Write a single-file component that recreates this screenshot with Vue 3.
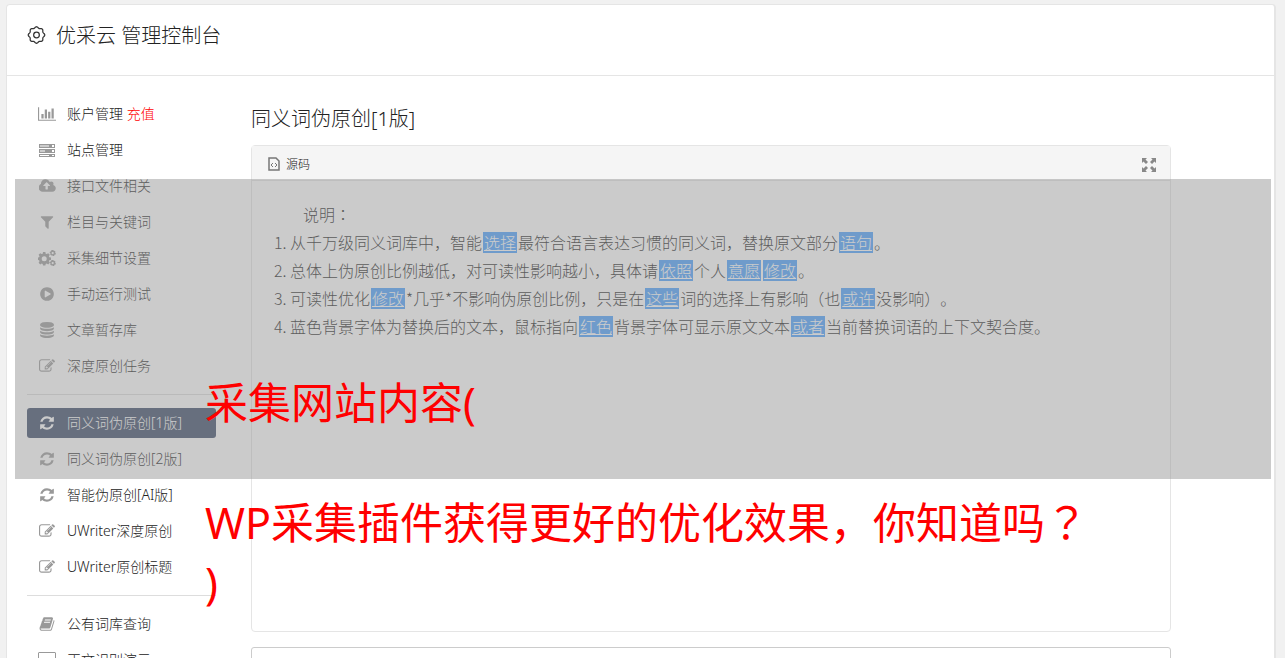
<script setup>
const icons = {
  chart: { box: '0 0 2048 1792', w: 18, paths: ['M640 896v512h-256v-512h256zm384-512v1024h-256v-1024h256zm1024 1152v128h-2048v-1536h128v1408h1920zm-640-896v768h-256v-768h256zm384-384v1152h-256v-1152h256z'] },
  server: { box: '0 0 18 16', w: 18, paths: ['M1 2h16v4H1zM2 3.500v1h9v-1zM14 3v2h2V3zM1 7h16v4H1zM2 8.500v1h5v-1zM14 8v2h2V8zM1 12h16v3H1zM2 13v1h9v-1zM14 13v1h2v-1z'] },
  cloud: { box: '0 0 1856 1792', w: 17, paths: ['M1216 864q0-14-9-23l-352-352q-9-9-23-9t-23 9l-351 351q-10 12-10 24 0 14 9 23t23 9h224v352q0 13 9.500 22.500t22.500 9.500h192q13 0 22.500-9.500t9.500-22.500v-352h224q13 0 22.500-9.500t9.500-22.500zm640 288q0 159-112.500 271.500t-271.500 112.500h-1088q-185 0-316.500-131.500t-131.500-316.500q0-130 70-240t188-165q-2-30-2-43 0-212 150-362t362-150q156 0 285.500 87t188.500 231q71-62 166-62 106 0 181 75t75 181q0 76-41 138 130 31 213.500 135.500t83.500 238.500z'] },
  filter: { box: '0 0 1792 1792', w: 16, paths: ['M1595 295q17 41-14 70l-493 493v742q0 42-39 59-13 5-25 5-27 0-45-19l-256-256q-19-19-19-45v-486l-493-493q-31-29-14-70 17-39 59-39h1280q42 0 59 39z'] },
  cogs: { box: '0 0 18 16', w: 18, paths: [
    'M5 2h2.400l.3 1.700 1 .4L10.200 3.200 11.800 4.800 10.900 6.300l.4 1L13 7.600v2.400l-1.700.3-.4 1 .9 1.500-1.600 1.600-1.500-.9-1 .4-.3 1.700H5l-.3-1.700-1-.4-1.500.9L.6 12.800l.9-1.500-.4-1L-.4 10V7.600l1.500-.3.4-1L.6 4.800 2.200 3.200l1.500.9 1-.4zM6.200 6.300a2.500 2.500 0 1 0 0 5 2.500 2.500 0 1 0 0-5z',
    'M14 0h1.500l.3 1 1-.3.8 1.200-.6.8.9.6-.5 1.400-1 .1-.2 1.100-1.400.2-.6-.9-1 .4-1-1 .4-1-.9-.6.2-1.400 1.100-.2.1-1zM14.700 2a1.100 1.100 0 1 0 0 2.200 1.100 1.100 0 1 0 0-2.200z',
    'M14 10h1.500l.3 1 1-.3.8 1.200-.6.8.9.6-.5 1.400-1 .1-.2 1.100-1.400.2-.6-.9-1 .4-1-1 .4-1-.9-.6.2-1.400 1.100-.2.1-1zM14.700 12a1.100 1.100 0 1 0 0 2.200 1.100 1.100 0 1 0 0-2.200z'] },
  play: { box: '0 0 1792 1792', w: 16, paths: ['M896 128q209 0 385.500 103t279.500 279.500 103 385.500-103 385.500-279.500 279.500-385.500 103-385.500-103-279.500-279.500-103-385.500 103-385.500 279.500-279.500 385.500-103zm384 823q32-18 32-55t-32-55l-544-320q-31-19-64-1-32 19-32 56v640q0 37 32 56 16 8 32 8 17 0 32-9z'] },
  database: { box: '0 0 1792 1792', w: 16, paths: ['M896 768q237 0 443-43t325-127v170q0 69-103 128t-280 93.500-385 34.500-385-34.500-280-93.500-103-128v-170q119 84 325 127t443 43zm0 768q237 0 443-43t325-127v170q0 69-103 128t-280 93.500-385 34.500-385-34.500-280-93.500-103-128v-170q119 84 325 127t443 43zm0-384q237 0 443-43t325-127v170q0 69-103 128t-280 93.500-385 34.500-385-34.500-280-93.500-103-128v-170q119 84 325 127t443 43zm0-1152q208 0 385 34.500t280 93.500 103 128v128q0 69-103 128t-280 93.500-385 34.500-385-34.500-280-93.500-103-128v-128q0-69 103-128t280-93.500 385-34.500z'] },
  edit: { box: '0 0 1792 1792', w: 16, paths: ['M888 1184l116-116-152-152-116 116v56h96v96h56zm440-720q-16-16-33 1l-350 350q-17 17-1 33t33-1l350-350q17-17 1-33zm80 594v190q0 119-84.500 203.500t-203.500 84.500h-832q-119 0-203.500-84.500t-84.500-203.500v-832q0-119 84.500-203.500t203.500-84.500h832q63 0 117 25 15 7 18 23 3 17-9 29l-49 49q-14 14-32 8-23-6-45-6h-832q-66 0-113 47t-47 113v832q0 66 47 113t113 47h832q66 0 113-47t47-113v-126q0-13 9-22l64-64q15-15 35-7t20 29zm-96-738l288 288-672 672h-288v-288zm444 132l-92 92-288-288 92-92q28-28 68-28t68 28l152 152q28 28 28 68t-28 68z'] },
  refresh: { box: '0 0 1792 1792', w: 16, paths: ['M1639 1056q0 5-1 7-64 268-268 434.500t-478 166.500q-146 0-282.500-55t-243.500-157l-129 129q-19 19-45 19t-45-19-19-45v-448q0-26 19-45t45-19h448q26 0 45 19t19 45-19 45l-137 137q71 66 161 102t187 36q134 0 250-65t186-179q11-17 53-117 8-23 30-23h192q13 0 22.500 9.500t9.500 22.500zm25-800v448q0 26-19 45t-45 19h-448q-26 0-45-19t-19-45 19-45l138-138q-148-137-349-137-134 0-250 65t-186 179q-11 17-53 117-8 23-30 23h-199q-13 0-22.500-9.500t-9.500-22.500v-7q65-268 270-434.500t480-166.500q146 0 284 55.500t245 156.500l130-129q19-19 45-19t45 19 19 45z'] },
  book: { box: '0 0 1792 1792', w: 16, paths: ['M1703 478q40 57 18 129l-275 906q-19 64-76.500 107.500t-122.500 43.500h-923q-77 0-148.500-53.500t-99.500-131.500q-24-67-2-127 0-4 3-27t4-37q1-8-3-21.500t-3-19.500q2-11 8-21t16.500-23.500 16.500-23.500q23-38 45-91.500t30-91.500q3-10 .5-30t-.5-28q3-11 17-28t17-23q21-36 42-92t25-90q1-9-2.500-32t.5-28q4-13 22-30.500t22-22.500q19-26 42.500-84.500t27.500-96.500q1-8-3-25.500t-2-26.500q2-8 9-18t18-23 17-21q8-12 16.500-30.500t15-35 16-36 19.500-32 26.500-23.500 36-11.500 47.500 5.500l-1 3q38-9 51-9h761q74 0 114 56t18 130l-274 906q-36 119-71.500 153.500t-128.500 34.500h-869q-27 0-38 15-11 16-1 43 24 70 144 70h923q29 0 56-15.500t35-41.500l300-987q7-22 5-57 38 15 59 43zm-1064 2q-4 13 2 22.500t20 9.500h608q13 0 25.500-9.500t16.500-22.500l21-64q4-13-2-22.500t-20-9.500h-608q-13 0-25.500 9.500t-16.500 22.500zm-83 256q-4 13 2 22.500t20 9.500h608q13 0 25.500-9.500t16.500-22.500l21-64q4-13-2-22.500t-20-9.500h-608q-13 0-25.500 9.500t-16.500 22.500z'] },
  screen: { box: '0 0 18 16', w: 18, paths: ['M1 0h16l1 1v11l-1 1h-6v2h2v1H5v-1h2v-2H1l-1-1V1zM1 1v11h16V1z'] }
}

const groups = [
  [
    { icon: 'chart', text: '账户管理', extra: '充值' },
    { icon: 'server', text: '站点管理' },
    { icon: 'cloud', text: '接口文件相关' },
    { icon: 'filter', text: '栏目与关键词' },
    { icon: 'cogs', text: '采集细节设置' },
    { icon: 'play', text: '手动运行测试' },
    { icon: 'database', text: '文章暂存库' },
    { icon: 'edit', text: '深度原创任务' }
  ],
  [
    { icon: 'refresh', text: '同义词伪原创[1版]', active: true },
    { icon: 'refresh', text: '同义词伪原创[2版]' },
    { icon: 'refresh', text: '智能伪原创[AI版]' },
    { icon: 'edit', text: 'UWriter深度原创' },
    { icon: 'edit', text: 'UWriter原创标题' }
  ],
  [
    { icon: 'book', text: '公有词库查询' },
    { icon: 'screen', text: '正文识别演示' }
  ]
]

// Odd-indexed parts of each line are the replaced words.
const lines = [
  ['从千万级同义词库中，智能', '选择', '最符合语言表达习惯的同义词，替换原文部分', '语句', '。'],
  ['总体上伪原创比例越低，对可读性影响越小，具体请', '依照', '个人', '意愿', '', '修改', '。'],
  ['可读性优化', '修改', '*几乎*不影响伪原创比例，只是在', '这些', '词的选择上有影响（也', '或许', '没影响）。'],
  ['蓝色背景字体为替换后的文本，鼠标指向', '红色', '背景字体可显示原文文本', '或者', '当前替换词语的上下文契合度。']
]

function gearOutline() {
  const pts = []
  for (let i = 0; i <= 96; i++) {
    const a = (i / 96) * Math.PI * 2
    const r = 8 + 0.7 * Math.cos(a * 8)
    pts.push(`${(10 + r * Math.sin(a)).toFixed(2)} ${(10 - r * Math.cos(a)).toFixed(2)}`)
  }
  return 'M' + pts.join('L') + 'Z'
}
const gear = gearOutline()
</script>

<template>
  <div class="page">
    <div class="card">
      <header class="header">
        <svg class="gear" viewBox="0 0 20 20" aria-hidden="true">
          <path :d="gear" />
          <circle cx="10" cy="10" r="3" />
        </svg>
        <h1>优采云 管理控制台</h1>
      </header>
      <div class="body">
        <nav class="side">
          <ul v-for="(group, g) in groups" :key="g">
            <li v-for="item in group" :key="item.text">
              <a href="#" :class="{ active: item.active }">
                <span class="ico">
                  <svg :viewBox="icons[item.icon].box" :width="icons[item.icon].w" height="16" aria-hidden="true">
                    <path v-for="(p, i) in icons[item.icon].paths" :key="i" :d="p" fill-rule="evenodd" />
                  </svg>
                </span>
                <span class="label">{{ item.text }} <em v-if="item.extra">{{ item.extra }}</em></span>
              </a>
            </li>
          </ul>
        </nav>
        <main class="main">
          <h2>同义词伪原创[1版]</h2>
          <section class="editor">
            <div class="toolbar">
              <button type="button" class="source">
                <svg width="12" height="14" viewBox="0 0 12 14" aria-hidden="true">
                  <path class="sheet" d="M1 1h7l3 3v9H1z" />
                  <path d="M5 6L3 8l2 2M7 6l2 2-2 2" />
                </svg>
                <span>源码</span>
              </button>
              <button type="button" class="full" aria-label="全屏">
                <svg width="14" height="14" viewBox="0 0 14 14" aria-hidden="true">
                  <path d="M0 0h5L3.500 1.500 6 4 4 6 1.500 3.500 0 5zM14 0v5l-1.500-1.500L10 6 8 4l2.500-2.500L9 0zM0 14V9l1.500 1.500L4 8l2 2-2.500 2.500L5 14zM14 14H9l1.500-1.500L8 10l2-2 2.500 2.500L14 9z" />
                </svg>
              </button>
            </div>
            <div class="content">
              <p>说明<span class="centred">：</span></p>
              <ol>
                <li v-for="(line, n) in lines" :key="n"><template v-for="(part, i) in line" :key="i"><mark v-if="i % 2">{{ part }}</mark><template v-else>{{ part }}</template></template></li>
              </ol>
            </div>
          </section>
          <section class="result"></section>
        </main>
      </div>
    </div>
    <div class="band"></div>
    <div class="caption">
      <p>采集网站内容(</p>
      <p class="second">WP采集插件获得更好的优化效果，你知道吗<span class="centred">？</span><br>)</p>
    </div>
  </div>
</template>

<style>
html,
body {
  background: #f1f1f1;
}
</style>

<style scoped>
* {
  box-sizing: border-box;
}
.page {
  position: relative;
  height: 100vh;
  overflow: hidden;
  padding: 4px 9px 0 6px;
  font-family: "Noto Sans", "Noto Sans CJK SC", sans-serif;
  font-weight: 300;
  text-spacing-trim: space-all;
  color: #222;
}
h1, h2, p, ul, ol {
  margin: 0;
  padding: 0;
}
.card {
  min-height: 100%;
  background: #fff;
  border: 1px solid #e5e5e5;
  border-right-width: 2px;
  border-radius: 4px;
}
.header {
  display: flex;
  align-items: flex-start;
  gap: 10px;
  height: 71px;
  padding: 16px 20px 0;
  border-bottom: 1px solid #e5e5e5;
}
.gear {
  width: 19px;
  height: 28px;
  fill: none;
  stroke: #333;
  stroke-width: 1.3;
}
h1, h2 {
  font-size: 20px;
  font-weight: 300;
  line-height: 28px;
}
h1 {
  padding-top: 1px;
}
.body {
  display: flex;
  gap: 35px;
  padding: 23px 20px;
}
.side {
  flex: none;
  width: 189px;
}
.side ul {
  display: flex;
  flex-direction: column;
  gap: 6px;
  list-style: none;
}
.side ul + ul {
  margin-top: 13px;
  padding-top: 13px;
  border-top: 1px solid #ddd;
}
.side a {
  display: flex;
  align-items: center;
  gap: 10px;
  height: 30px;
  padding-left: 10px;
  border-radius: 3px;
  font-size: 14px;
  color: #222;
  text-decoration: none;
  white-space: nowrap;
}
.label {
  padding-bottom: 2px;
}
.side em {
  font-style: normal;
  color: #f00;
}
.side .active {
  background: #374765;
  color: #fff;
}
.ico {
  display: flex;
  justify-content: center;
  width: 20px;
}
.ico svg {
  fill: #999;
}
.active .ico svg {
  fill: #fff;
}
.main {
  flex: 1;
  max-width: 920px;
}
h2 {
  margin: 6px 0 12px;
}
.editor {
  min-height: 487px;
  border: 1px solid #e5e5e5;
  border-radius: 4px;
}
.toolbar {
  display: flex;
  justify-content: space-between;
  align-items: center;
  height: 35px;
  padding: 2px 14px 0 16px;
  background: #f5f5f5;
  border-bottom: 1px solid #e5e5e5;
}
button {
  display: flex;
  align-items: center;
  gap: 6px;
  padding: 0;
  border: 0;
  background: none;
  font: inherit;
  font-size: 12px;
  color: #222;
}
.source svg {
  fill: none;
  stroke: #777;
}
.source .sheet {
  stroke-width: 1.5;
}
.full {
  padding-top: 2px;
}
.full svg {
  fill: #888;
}
.content {
  padding: 19px;
  font-family: "Noto Sans CJK SC", sans-serif;
  font-size: 16px;
  line-height: 28px;
  color: #222;
}
.content p {
  text-indent: 2em;
}
.content ol {
  padding-left: 19px;
}
.centred {
  font-family: "Noto Sans CJK JP", sans-serif;
  line-height: 1;
}
mark {
  display: inline-block;
  margin: 0 1px;
  padding: 0 1px;
  line-height: 21px;
  background: #479fff;
  color: #fff;
  text-decoration: underline;
}
.result {
  height: 120px;
  margin-top: 15px;
  border: 1px solid #ccc;
  border-radius: 3px;
}
.band {
  position: absolute;
  top: 179px;
  left: 15px;
  right: 14px;
  height: 300px;
  background: rgba(151, 151, 151, 0.5);
}
.caption {
  position: absolute;
  top: 373px;
  left: 205px;
  font-size: 43px;
  font-weight: 400;
  line-height: 60px;
  color: #f00;
  white-space: nowrap;
}
.second {
  margin-top: 60px;
}
</style>
